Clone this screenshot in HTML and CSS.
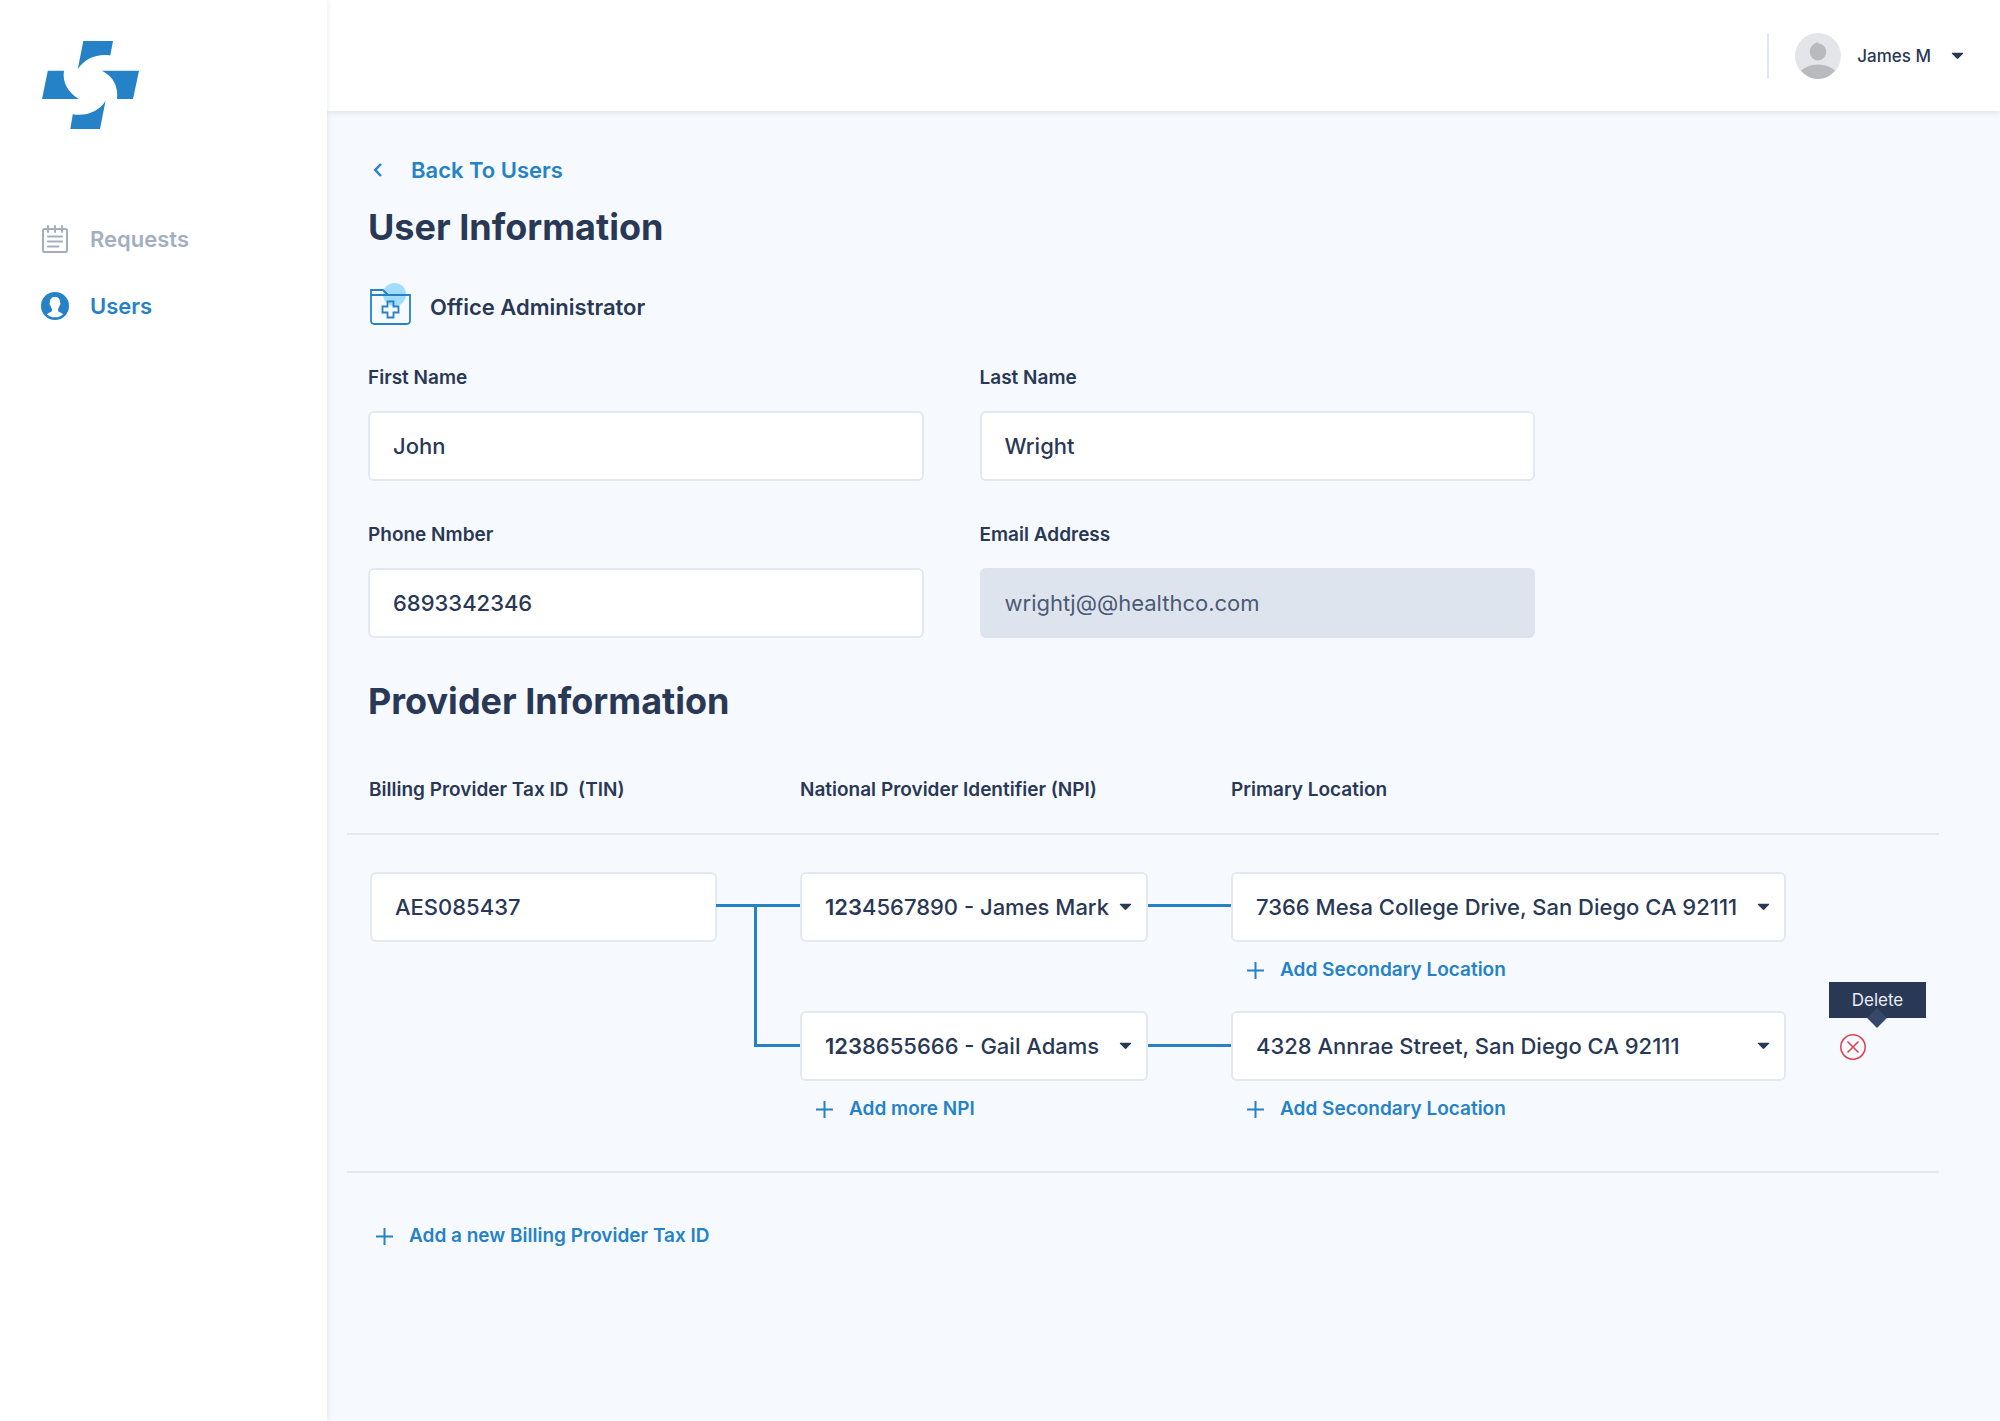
FILE: index.html
```html
<!DOCTYPE html>
<html lang="en">
<head>
<meta charset="utf-8">
<title>User Information</title>
<meta name="viewport" content="width=device-width, initial-scale=1">
<link rel="stylesheet" href="styles.css">
</head>
<body>
<svg class="sprite" aria-hidden="true">
  <symbol id="plus" viewBox="0 0 17 17"><path d="M8.500 0V17M0 8.500H17" fill="none" stroke="currentColor" stroke-width="2"/></symbol>
  <symbol id="caret" viewBox="0 0 13 8"><path d="M1.300 .7H11.700Q12.800 .9 12 1.800L7.300 6.600Q6.500 7.300 5.700 6.600L1 1.800Q.2 .9 1.300 .7Z" fill="currentColor"/></symbol>
</svg>
<div class="app">
  <aside class="sidebar">
    <a class="logo" href="#" aria-label="Home">
      <svg width="98" height="88" viewBox="0 0 98 88" fill="#2582c6">
        <path d="M41.300 0H71L68.300 14.400C55 12.500 43 17.500 35.800 28Z"/>
        <path d="M5.800 29.700H22C20 41 26 51.500 37 58H0Z"/>
        <path d="M60 29.700H97L91 58H75C76.500 46 71.500 35.500 60 29.700Z"/>
        <path d="M63.500 60L58 88H28.300L30.800 73.300C44.500 75.500 56.500 70.500 63.500 60Z"/>
      </svg>
    </a>
    <nav class="nav">
      <a class="nav-item" href="#">
        <svg width="28" height="28" viewBox="0 0 28 28" fill="none" stroke="currentColor" stroke-width="2" stroke-linecap="round">
          <path d="M2 5.500Q2 4 3.500 4H24.500Q26 4 26 5.500V25.500Q26 27 24.500 27H3.500Q2 27 2 25.500ZM7 1V7M14 1V7M21 1V7M7 11.500H21M7 16.500H21M7 21.500H17.500"/>
        </svg>
        Requests
      </a>
      <a class="nav-item nav-item-active" href="#" aria-current="page">
        <svg width="28" height="28" viewBox="0 0 28 28">
          <circle cx="14" cy="14" r="14" fill="currentColor"/>
          <path d="M14 5C17.300 5 19.200 7 19.100 10.500C19.900 11 19.400 13.200 18.600 13.600C18.200 15.200 17.600 16 17.100 16.700V19C18 20.600 20.500 20.500 22.200 22.200C20 24.200 17.300 25.300 14 25.300S8 24.200 5.800 22.200C7.500 20.500 10 20.600 10.900 19V16.700C10.400 16 9.800 15.200 9.400 13.600C8.600 13.200 8.100 11 8.900 10.500C8.800 7 10.700 5 14 5Z" fill="#fff"/>
        </svg>
        Users
      </a>
    </nav>
  </aside>
  <div class="page">
    <header class="topbar">
      <button class="account" type="button">
        <svg width="46" height="46" viewBox="0 0 46 46">
          <circle cx="23" cy="23" r="23" fill="#e4e5e9"/>
          <path d="M6 37.500Q13 31.500 23 31.500T40 37.500Q33 46 23 46T6 37.500Z" fill="#b8babe"/>
          <path d="M22 9.300Q24.500 11.300 26.500 11.200Q31.200 13.500 31.200 19.200A8.200 8.200 0 0 1 14.800 19.200Q14.800 12 22 9.300Z" fill="#b8babe"/>
        </svg>
        <span>James M</span>
        <svg class="caret" width="13" height="8"><use href="#caret"/></svg>
      </button>
    </header>
    <main class="content">
      <div class="inset">
        <a class="back" href="#">
          <svg width="10" height="14" viewBox="0 0 10 14"><path d="M8 1L2.200 7L8 13" fill="none" stroke="currentColor" stroke-width="2.400"/></svg>
          Back To Users
        </a>
        <h1>User Information</h1>
        <div class="role">
          <svg width="43" height="48" viewBox="0 0 43 48">
            <circle cx="25.500" cy="11.500" r="11.500" fill="#a1ddfb"/>
            <path d="M2 12V7H14L19 12H41V37.500Q41 41 37.500 41H5.500Q2 41 2 37.500V12H19M18.500 18.500H24.500V23.500H29.500V29.500H24.500V34.500H18.500V29.500H13.500V23.500H18.500Z" fill="none" stroke="#2582c6" stroke-width="1.800"/>
          </svg>
          Office Administrator
        </div>
        <form class="user-form">
          <div class="field"><label for="first">First Name</label><input class="box" id="first" type="text" value="John"></div>
          <div class="field"><label for="last">Last Name</label><input class="box" id="last" type="text" value="Wright"></div>
          <div class="field"><label for="phone">Phone Nmber</label><input class="box" id="phone" type="tel" value="6893342346"></div>
          <div class="field"><label for="email">Email Address</label><input class="box" id="email" type="text" value="wrightj@@healthco.com" disabled></div>
        </form>
        <h2>Provider Information</h2>
      </div>
      <table class="providers">
        <colgroup><col class="col-tin"><col class="col-npi"><col><col class="col-actions"></colgroup>
        <thead>
          <tr>
            <th scope="col">Billing Provider Tax ID&nbsp; (TIN)</th>
            <th scope="col">National Provider Identifier (NPI)</th>
            <th scope="col">Primary Location</th>
            <td></td>
          </tr>
        </thead>
        <tbody>
          <tr>
            <td class="tin linked" rowspan="2"><input class="box" type="text" value="AES085437" aria-label="Billing Provider Tax ID"></td>
            <td class="npi linked">
              <div class="box select-box">
                <label for="npi1">123</label>
                <select id="npi1"><option>4567890 - James Mark</option></select>
                <svg class="caret" width="13" height="8"><use href="#caret"/></svg>
              </div>
            </td>
            <td>
              <div class="box select-box">
                <select aria-label="Primary location"><option>7366 Mesa College Drive, San Diego CA 92111</option></select>
                <svg class="caret" width="13" height="8"><use href="#caret"/></svg>
              </div>
              <button class="add" type="button"><svg width="17" height="17"><use href="#plus"/></svg>Add Secondary Location</button>
            </td>
            <td></td>
          </tr>
          <tr>
            <td class="npi linked branch">
              <div class="box select-box">
                <label for="npi2">123</label>
                <select id="npi2"><option>8655666 - Gail Adams</option></select>
                <svg class="caret" width="13" height="8"><use href="#caret"/></svg>
              </div>
              <button class="add" type="button"><svg width="17" height="17"><use href="#plus"/></svg>Add more NPI</button>
            </td>
            <td>
              <div class="box select-box">
                <select aria-label="Primary location"><option>4328 Annrae Street, San Diego CA 92111</option></select>
                <svg class="caret" width="13" height="8"><use href="#caret"/></svg>
              </div>
              <button class="add" type="button"><svg width="17" height="17"><use href="#plus"/></svg>Add Secondary Location</button>
            </td>
            <td class="actions">
              <div class="remove">
                <button type="button" aria-describedby="remove-tip" aria-label="Delete">
                  <svg width="26" height="26" viewBox="0 0 26 26" fill="none" stroke="#dd4048" stroke-width="1.500"><circle cx="13" cy="13" r="12.200"/><path d="M7.500 7.500L18.500 18.500M18.500 7.500L7.500 18.500"/></svg>
                </button>
                <span class="tooltip" id="remove-tip" role="tooltip"><span>Delete</span></span>
              </div>
            </td>
          </tr>
        </tbody>
      </table>
      <button class="add add-tin" type="button"><svg width="17" height="17"><use href="#plus"/></svg>Add a new Billing Provider Tax ID</button>
    </main>
  </div>
</div>
</body>
</html>
```
FILE: styles.css
```css
:root {
  --blue: #2582c6;
  --navy: #293855;
  --line: #e4e9f0;
  --muted: #a3afbf;
}

*, *::before, *::after { box-sizing: border-box; }

body {
  margin: 0;
  color: var(--navy);
  background: #f6f9fe;
  font: 500 22px/28px Inter, "Liberation Sans", sans-serif;
}

svg { display: block; flex: none; }
a { color: inherit; text-decoration: none; }
button, input, select { font: inherit; color: inherit; }
button { display: block; border: 0; padding: 0; background: none; cursor: pointer; }
.sprite { display: none; }

.app {
  display: grid;
  grid-template-columns: 327px minmax(0, 1fr);
  min-height: 100vh;
}

.sidebar {
  position: relative;
  z-index: 1;
  padding: 41px 41px 0;
  background: #fff;
  box-shadow: 0 0 6px rgba(41, 56, 85, 0.1);
}

.logo {
  display: inline-block;
  padding-left: 1px;
}

.nav {
  display: grid;
  gap: 39px;
  margin-top: 90px;
}

.nav-item {
  display: flex;
  align-items: center;
  gap: 21px;
  color: var(--muted);
  font-weight: 600;
}

.nav-item-active { color: var(--blue); }

.topbar {
  display: flex;
  justify-content: flex-end;
  align-items: center;
  height: 111px;
  padding-right: 36px;
  background: #fff;
  box-shadow: 0 1px 6px rgba(41, 56, 85, 0.14);
}

.account {
  display: flex;
  align-items: center;
  gap: 16px;
  padding-left: 26px;
  border-left: 2px solid var(--line);
  font-size: 17px;
}

.account .caret { margin-left: 4px; }

.content { padding: 44px 61px 60px 20px; }
.inset { padding-left: 21px; }

.back {
  display: inline-flex;
  align-items: center;
  gap: 28px;
  padding-left: 5px;
  color: var(--blue);
  font-weight: 600;
}

h1, h2 {
  margin: 0;
  font-size: 36px;
  line-height: 40px;
  font-weight: 700;
}

h1 { margin-top: 23px; }
h2 { margin-top: 43px; }

.role {
  display: flex;
  align-items: center;
  gap: 18px;
  margin-top: 36px;
  padding-left: 1px;
  font-weight: 600;
}

.user-form {
  display: grid;
  grid-template-columns: 1fr 1fr;
  gap: 40px 56px;
  max-width: 1167px;
  margin-top: 33px;
}

.field { display: grid; gap: 19px; }

.field label, th {
  font-size: 19px;
  font-weight: 600;
}

.box {
  width: 100%;
  height: 70px;
  padding: 0 23px;
  border: 2px solid var(--line);
  border-radius: 6px;
  background: #fff;
}

.box:disabled {
  border-color: #dee4ee;
  background: #dee4ee;
  color: #4a5a75;
  font-weight: 400;
}

.providers {
  width: 100%;
  min-width: 1300px;
  margin-top: 55px;
  table-layout: fixed;
  border-collapse: separate;
  border-spacing: 0;
  border-bottom: 2px solid var(--line);
}

.col-tin { width: 453px; }
.col-npi { width: 431px; }
.col-actions { width: 153px; }

.providers thead th, .providers thead td {
  padding: 0 0 29px;
  border-bottom: 2px solid var(--line);
  text-align: left;
}

.providers thead th:first-child { padding-left: 22px; }

.providers tbody td {
  position: relative;
  padding: 13px 0 0;
  vertical-align: top;
}

.providers tbody tr:first-child td { padding-top: 37px; }
.providers tbody tr:last-child td { padding-bottom: 34px; }
.providers tbody .tin { padding-left: 23px; }
.providers tbody .linked { padding-right: 83px; }

/* Connector lines between a tax ID, its NPIs and their locations */
.linked::after {
  content: "";
  position: absolute;
  top: 46px;
  right: 0;
  width: 84px;
  height: 3px;
  background: var(--blue);
}

tr:first-child .linked::after { top: 69px; }

.branch::before {
  content: "";
  position: absolute;
  top: -94px;
  right: 100%;
  width: 46px;
  height: 143px;
  border: solid var(--blue);
  border-width: 0 0 3px 3px;
}

.select-box {
  display: flex;
  align-items: center;
  position: relative;
  z-index: 1;
  padding: 0 14px 0 23px;
}

.select-box label { font-weight: 600; }

.select-box select {
  flex: 1;
  min-width: 0;
  height: 100%;
  padding: 0;
  border: 0;
  background: none;
  appearance: none;
}

.add {
  display: flex;
  align-items: center;
  gap: 16px;
  height: 56px;
  padding-left: 16px;
  color: var(--blue);
  font-size: 19px;
  font-weight: 600;
}

.add-tin { margin: 35px 0 0 13px; }

.actions .remove {
  position: relative;
  width: 26px;
  margin: 23px 0 0 54px;
}

.tooltip {
  position: absolute;
  bottom: 42px;
  left: -11px;
  width: 97px;
  background: var(--navy);
  color: #e9eef6;
  font-size: 17px;
  font-weight: 400;
  line-height: 36px;
  text-align: center;
}

.tooltip::before {
  content: "";
  position: absolute;
  top: 29px;
  left: 41px;
  width: 14px;
  height: 14px;
  background: #34486a;
  transform: rotate(45deg);
}

.tooltip span { position: relative; }
```
